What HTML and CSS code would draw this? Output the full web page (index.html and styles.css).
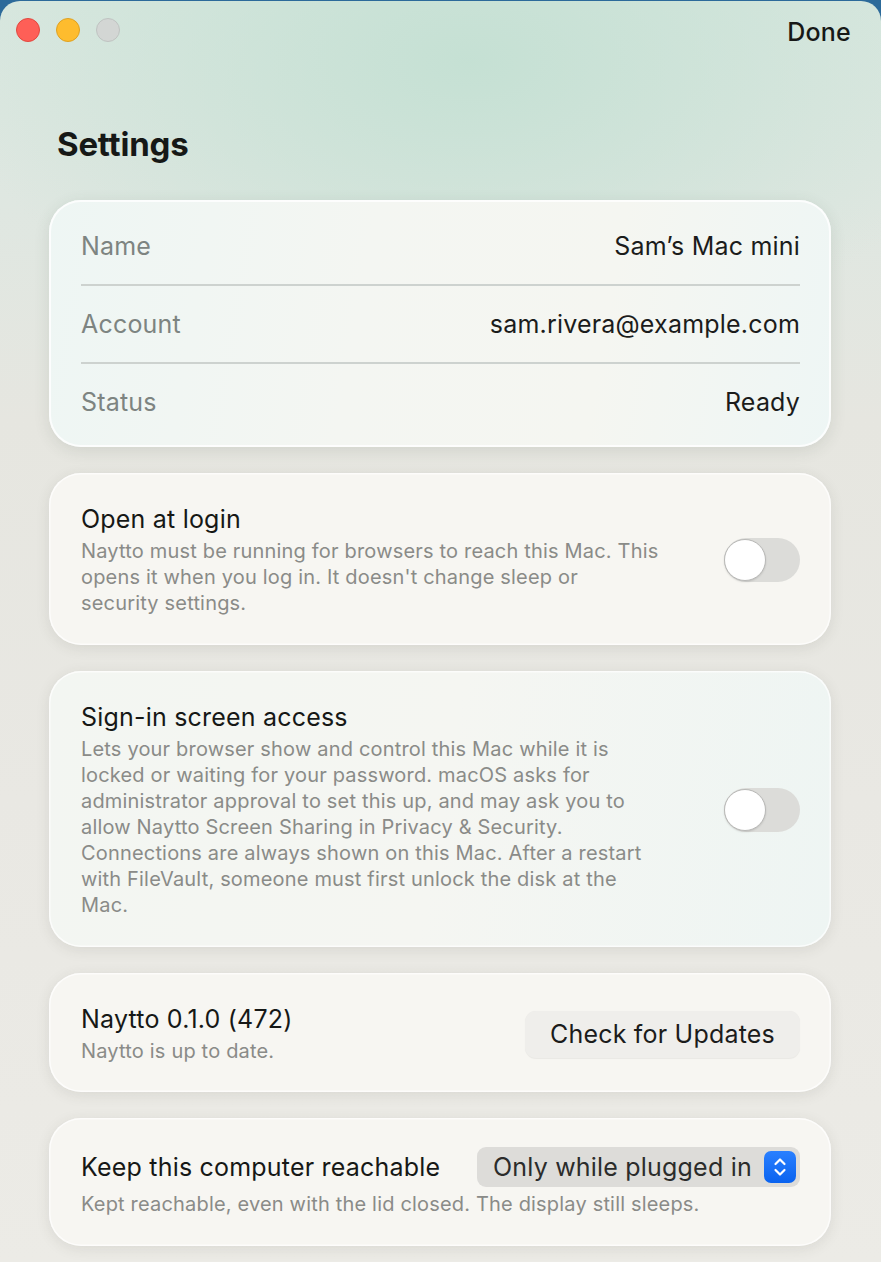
FILE: index.html
```html
<!DOCTYPE html>
<html lang="en">
<head>
<meta charset="utf-8">
<title>Settings</title>
<link rel="stylesheet" href="styles.css">
</head>
<body>
<div class="window">
  <header class="titlebar">
    <div class="lights">
      <span class="light red"></span>
      <span class="light yellow"></span>
      <span class="light grey"></span>
    </div>
    <button class="done">Done</button>
  </header>

  <h1 class="title">Settings</h1>

  <section class="card info">
    <div class="info-row"><span class="label">Name</span><span class="value">Sam’s Mac mini</span></div>
    <div class="info-row"><span class="label">Account</span><span class="value">sam.rivera@example.com</span></div>
    <div class="info-row"><span class="label">Status</span><span class="value">Ready</span></div>
  </section>

  <section class="card option">
    <div class="option-text wrap-text">
      <h2 class="option-title">Open at login</h2>
      <p class="desc">Naytto must be running for browsers to reach this Mac. This opens it when you log in. It doesn't change sleep or <span class="keep">security settings.</span></p>
    </div>
    <div class="toggle"><span class="knob"></span></div>
  </section>

  <section class="card option tinted">
    <div class="option-text wrap-text">
      <h2 class="option-title">Sign-in screen access</h2>
      <p class="desc">Lets your browser show and control this Mac while it is locked or waiting for your password. macOS asks for administrator approval to set this up, and may ask you to allow Naytto Screen Sharing in Privacy &amp; Security. Connections are always shown on this Mac. After a restart with FileVault, someone must first unlock the disk at the Mac.</p>
    </div>
    <div class="toggle"><span class="knob"></span></div>
  </section>

  <section class="card option version">
    <div class="option-text">
      <h2 class="option-title">Naytto 0.1.0 (472)</h2>
      <p class="desc">Naytto is up to date.</p>
    </div>
    <button class="btn">Check for Updates</button>
  </section>

  <section class="card reach">
    <div class="reach-row">
      <h2 class="option-title">Keep this computer reachable</h2>
      <div class="popup">
        <span class="popup-label">Only while plugged in</span>
        <span class="stepper">
          <svg width="16" height="24" viewBox="0 0 16 24" fill="none" stroke="#fff" stroke-width="2.2" stroke-linecap="round" stroke-linejoin="round">
            <path d="M3.5 9 L8 4.5 L12.5 9"/>
            <path d="M3.5 15 L8 19.5 L12.5 15"/>
          </svg>
        </span>
      </div>
    </div>
    <p class="desc">Kept reachable, even with the lid closed. The display still sleeps.</p>
  </section>
</div>
</body>
</html>
```

FILE: styles.css
```css
* { box-sizing: border-box; }

html, body {
  margin: 0;
  padding: 0;
}

body {
  background: #2c6a9a;
  font-family: Inter, "Noto Sans", "Liberation Sans", sans-serif;
  color: #1b1c1b;
  padding-top: 1px;
}

.window {
  width: 881px;
  height: 1261px;
  overflow: hidden;
  border-radius: 20px 20px 0 0;
  background:
    radial-gradient(ellipse 520px 300px at 470px 60px, rgba(196, 224, 211, 0.95), rgba(196, 224, 211, 0) 100%),
    linear-gradient(180deg, #d8e7df 0px, #dfe7e1 200px, #e6e6e0 420px, #e9e8e3 800px, #ecebe6 1262px);
  padding: 0 50px 0 49px;
}

.titlebar {
  height: 57px;
  display: flex;
  align-items: center;
  justify-content: space-between;
  margin: 0 -20px 0 -33px;
}

.lights {
  display: flex;
  gap: 16px;
}

.light {
  width: 24px;
  height: 24px;
  border-radius: 50%;
  display: block;
}
.light.red { background: #fe5f57; border: 1px solid #e1483f; }
.light.yellow { background: #febc2e; border: 1px solid #dea123; }
.light.grey { background: #d3d6d4; border: 1px solid #bfc3c1; }

.done {
  background: none;
  border: 0;
  padding: 0;
  font-family: inherit;
  font-size: 25px;
  font-weight: 500;
  letter-spacing: 0.2px;
  color: #161816;
  margin-top: 4px;
}

.title {
  margin: 0;
  padding: 66px 0 0 8px;
  height: 142px;
  font-size: 33px;
  font-weight: 700;
  color: #161816;
  letter-spacing: -0.2px;
  line-height: 40px;
}

.card {
  border-radius: 32px;
  background: #f7f6f2;
  box-shadow: 0 3px 14px rgba(60, 60, 50, 0.10), inset 0 0 0 1.5px rgba(255, 255, 255, 0.7);
  margin-bottom: 26px;
}

.info {
  padding: 8px 31px 7px 32px;
  background: linear-gradient(100deg, #eef6f4 0%, #f4f6f2 40%, #f5f6f1 70%, #eef6f5 100%);
  box-shadow: 0 4px 16px rgba(60, 70, 60, 0.12), inset 0 0 0 2px rgba(255, 255, 255, 0.8);
}

.info-row {
  height: 78px;
  display: flex;
  align-items: center;
  justify-content: space-between;
  font-size: 25px;
  letter-spacing: 0.2px;
  border-bottom: 2px solid #cdd2cf;
}
.info-row:last-child { border-bottom: 0; height: 76px; }

.label { color: #7d8481; }
.value { color: #1b1c1b; }

.option {
  display: flex;
  align-items: center;
  justify-content: space-between;
  padding: 31px 31px 29px 32px;
}

.tinted {
  background: linear-gradient(100deg, #f3f6f2 0%, #f5f6f2 50%, #eef5f3 100%);
}

.option-title {
  margin: 0;
  font-size: 25px;
  font-weight: 400;
  letter-spacing: 0.2px;
  line-height: 30px;
  color: #161816;
}

.desc {
  margin: 0;
  font-size: 20px;
  letter-spacing: 0.18px;
  line-height: 26px;
  color: #8a8b88;
}

.keep { white-space: nowrap; }

.option-text .option-title { margin-bottom: 4px; }

.wrap-text { flex: 0 0 582px; }

.toggle {
  width: 76px;
  height: 44px;
  border-radius: 22px;
  background: #dcdcd9;
  position: relative;
  flex-shrink: 0;
}

.knob {
  position: absolute;
  left: 0;
  top: 1px;
  width: 42px;
  height: 42px;
  border-radius: 50%;
  background: #ffffff;
  border: 1px solid #b9b9b7;
  box-shadow: 0 1px 2px rgba(0, 0, 0, 0.12);
}

.version {
  padding-bottom: 28px;
}

.btn {
  width: 275px;
  height: 47px;
  border: 0;
  border-radius: 11px;
  background: #efeeeb;
  font-family: inherit;
  font-size: 25px;
  letter-spacing: 0.2px;
  color: #1b1c1b;
  box-shadow: 0 0.5px 1px rgba(0, 0, 0, 0.06);
}

.reach {
  padding: 29px 31px 29px 32px;
}

.reach-row {
  display: flex;
  align-items: center;
  justify-content: space-between;
  margin-bottom: 4px;
}

.popup {
  width: 323px;
  height: 40px;
  border-radius: 9px;
  background: #dddcd9;
  display: flex;
  align-items: center;
  justify-content: space-between;
  padding: 0 4px 0 16px;
}

.popup-label {
  font-size: 25px;
  letter-spacing: 0.2px;
  color: #2b2c2b;
}

.stepper {
  width: 32px;
  height: 32px;
  border-radius: 7px;
  background: linear-gradient(180deg, #2a80ff, #0a63ef);
  display: flex;
  align-items: center;
  justify-content: center;
}
```
